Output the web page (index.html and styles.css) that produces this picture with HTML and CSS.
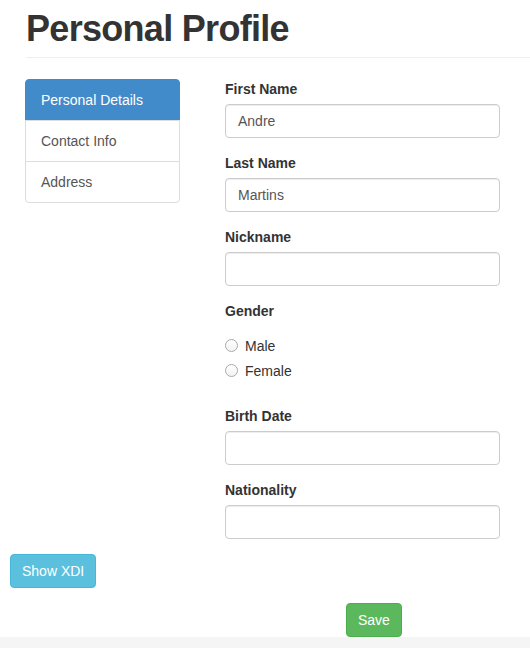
FILE: index.html
```html
<!DOCTYPE html>
<html lang="en">
<head>
<meta charset="utf-8">
<title>Personal Profile</title>
<link rel="stylesheet" href="styles.css">
</head>
<body>
<div class="page">
  <div class="page-header"><h1>Personal Profile</h1></div>
  <div class="row">
    <nav class="list-group">
      <a class="list-item active">Personal Details</a>
      <a class="list-item">Contact Info</a>
      <a class="list-item">Address</a>
    </nav>
    <form class="form">
      <div class="form-group">
        <label class="label">First Name</label>
        <input class="input" type="text" value="Andre">
      </div>
      <div class="form-group">
        <label class="label">Last Name</label>
        <input class="input" type="text" value="Martins">
      </div>
      <div class="form-group">
        <label class="label">Nickname</label>
        <input class="input" type="text" value="">
      </div>
      <div class="form-group gender-group">
        <label class="label">Gender</label>
        <div class="radio"><label class="radio-label"><input class="radio-input" type="radio" name="gender">Male</label></div>
        <div class="radio"><label class="radio-label"><input class="radio-input" type="radio" name="gender">Female</label></div>
      </div>
      <div class="form-group">
        <label class="label">Birth Date</label>
        <input class="input" type="text" value="">
      </div>
      <div class="form-group">
        <label class="label">Nationality</label>
        <input class="input" type="text" value="">
      </div>
    </form>
  </div>
  <div class="xdi-row"><button class="btn btn-info" type="button">Show XDI</button></div>
  <div class="save-row"><button class="btn btn-success" type="button">Save</button></div>
</div>
<footer class="footer"></footer>
</body>
</html>
```
FILE: styles.css
```css
* { box-sizing: border-box; }
html, body { margin: 0; padding: 0; }
body {
  font-family: "Liberation Sans", Arial, sans-serif;
  font-size: 14px;
  line-height: 20px;
  color: #333;
  background: #fff;
}
.page-header {
  margin: 9px 0 21px 26px;
  padding-bottom: 8px;
  border-bottom: 1px solid #eee;
}
.page-header h1 {
  margin: 0;
  font-size: 36px;
  line-height: 39.6px;
  font-weight: bold;
  letter-spacing: -0.7px;
  color: #333;
}
.row {
  display: flex;
  align-items: flex-start;
  margin-left: 25px;
}
.list-group {
  width: 155px;
  display: flex;
  flex-direction: column;
}
.list-item {
  display: block;
  padding: 10px 15px;
  border: 1px solid #ddd;
  margin-bottom: -1px;
  color: #555;
  background: #fff;
}
.list-item:first-child { border-radius: 4px 4px 0 0; }
.list-item:last-child { border-radius: 0 0 4px 4px; margin-bottom: 0; }
.list-item.active {
  background: #428bca;
  border-color: #428bca;
  color: #fff;
}
.form {
  margin: 0 0 0 45px;
  width: 275px;
}
.form-group { margin-bottom: 15px; }
.gender-group { margin-bottom: 25px; }
.label {
  display: block;
  font-weight: bold;
  margin-bottom: 5px;
}
.input {
  display: block;
  width: 100%;
  height: 34px;
  padding: 6px 12px;
  font-family: inherit;
  font-size: 14px;
  line-height: 20px;
  color: #555;
  background: #fff;
  border: 1px solid #ccc;
  border-radius: 4px;
  box-shadow: inset 0 1px 1px rgba(0,0,0,0.075);
  margin: 0;
}
.radio { margin: 15px 0 10px; }
.radio + .radio { margin-top: -5px; }
.radio-label {
  display: flex;
  align-items: center;
  min-height: 20px;
}
.radio-input {
  -webkit-appearance: none;
  appearance: none;
  width: 13px;
  height: 13px;
  margin: 0 7px 0 0;
  border: 1px solid #aaa;
  border-radius: 50%;
  background: linear-gradient(#fff, #f3f3f3);
}
.xdi-row { padding-left: 10px; }
.save-row { padding: 15px 0 0 346px; }
.btn {
  display: inline-block;
  padding: 6px 11px;
  font-family: inherit;
  font-size: 14px;
  line-height: 20px;
  border: 1px solid transparent;
  border-radius: 4px;
  color: #fff;
  margin: 0;
}
.btn-info { background: #5bc0de; border-color: #46b8da; }
.btn-success { background: #5cb85c; border-color: #4cae4c; }
.footer {
  background: #f5f5f5;
  height: 40px;
}
```
